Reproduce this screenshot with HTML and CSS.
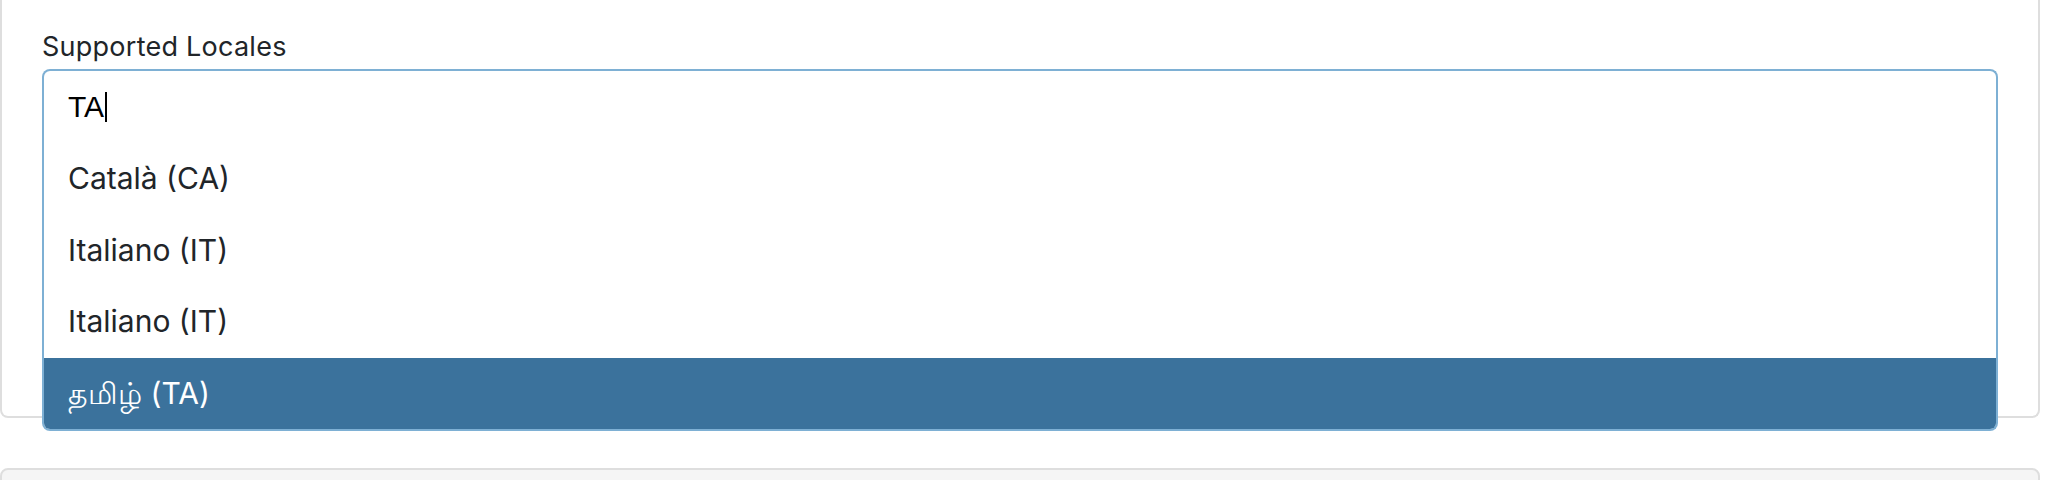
FILE: index.html
```html
<!DOCTYPE html>
<html lang="en">
<head>
<meta charset="utf-8">
<title>Supported Locales</title>
<link rel="stylesheet" href="styles.css">
</head>
<body>
<div class="page">
  <section class="panel">
    <label class="field-label" for="locale-search">Supported Locales</label>
    <div class="combo">
      <div class="control">
        <span class="typed">TA</span><span class="caret"></span>
      </div>
      <ul class="menu">
        <li class="option">Català (CA)</li>
        <li class="option">Italiano (IT)</li>
        <li class="option">Italiano (IT)</li>
        <li class="option is-active">தமிழ் (TA)</li>
      </ul>
    </div>
  </section>
  <section class="panel panel-muted"></section>
</div>
</body>
</html>
```
FILE: styles.css
```css
html, body {
  margin: 0;
  padding: 0;
  background: #ffffff;
}

body {
  font-family: Inter, "Noto Sans", "DejaVu Sans", sans-serif;
  color: #212529;
}

.page {
  width: 2040px;
}

.panel {
  border: 2px solid #dedede;
  border-top: none;
  border-radius: 0 0 8px 8px;
  padding: 27px 40px 273px 40px;
  background: #ffffff;
}

.field-label {
  display: block;
  font-size: 27px;
  letter-spacing: 0.25px;
  line-height: 39px;
  margin-bottom: 3px;
  color: #212529;
}

.combo {
  position: relative;
}

.control {
  height: 72px;
  border: 2px solid #7eb0d4;
  border-bottom: none;
  border-radius: 8px 8px 0 0;
  padding-left: 24px;
  display: flex;
  align-items: center;
  background: #ffffff;
}

.typed {
  font-family: "Liberation Sans", Arial, sans-serif;
  font-size: 30px;
  line-height: 72px;
  color: #000000;
}

.caret {
  display: inline-block;
  width: 2px;
  height: 30px;
  background: #000000;
  margin-left: 1px;
}

.menu {
  position: absolute;
  top: 100%;
  left: 0;
  right: 0;
  margin: 0;
  padding: 0;
  list-style: none;
  background: #ffffff;
  border: 2px solid #7eb0d4;
  border-top: none;
  border-radius: 0 0 8px 8px;
  overflow: hidden;
  z-index: 2;
}

.option {
  height: 71.5px;
  line-height: 71.5px;
  padding-left: 24px;
  font-size: 30px;
  color: #212529;
}

.option.is-active {
  background: #3b729c;
  color: #ffffff;
}

.panel-muted {
  margin-top: 50px;
  border-top: 2px solid #dedede;
  border-radius: 8px;
  background: #f5f5f5;
  padding: 0;
  height: 100px;
}
```
